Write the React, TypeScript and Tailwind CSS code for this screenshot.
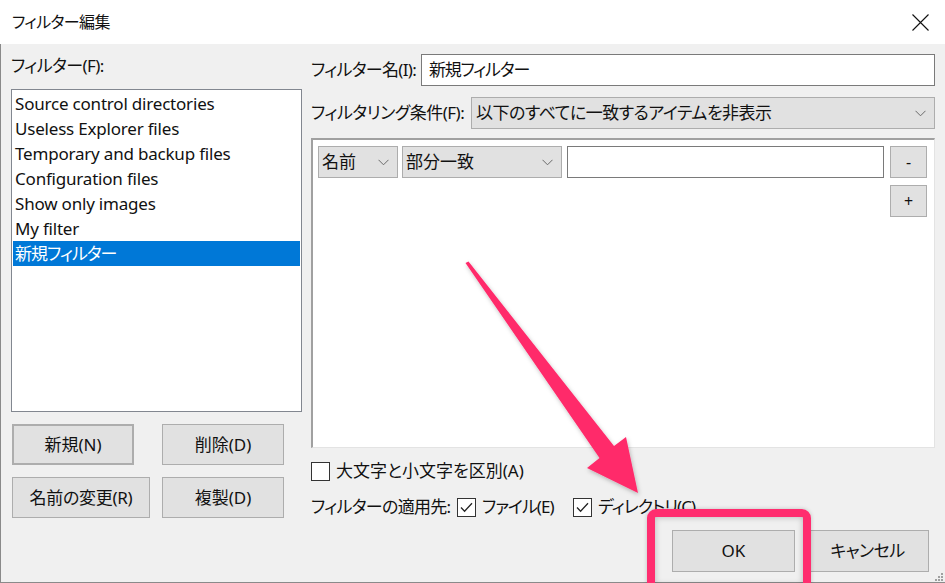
import React from "react";

const font = { fontFamily: '"Noto Sans", "Noto Sans CJK JP", sans-serif' };

function Chevron() {
  return (
    <svg width="11" height="7" viewBox="0 0 11 7" className="shrink-0">
      <path d="M0.5 0.8 L5.5 5.8 L10.5 0.8" fill="none" stroke="#6a6a6a" strokeWidth="1" />
    </svg>
  );
}

function Check({ checked }: { checked?: boolean }) {
  return (
    <div className="w-[19px] h-[19px] border border-[#333] bg-white flex items-center justify-center shrink-0">
      {checked && (
        <svg width="13" height="11" viewBox="0 0 13 11">
          <path d="M1 5.5 L4.6 9.2 L12 1.2" fill="none" stroke="#222" strokeWidth="1.3" />
        </svg>
      )}
    </div>
  );
}

function Btn({ label, className }: { label: string; className: string }) {
  return (
    <div className={`flex items-center justify-center bg-[#e1e1e1] border border-[#adadad] text-[#111] ${className}`}>
      {label}
    </div>
  );
}

const filters = [
  "Source control directories",
  "Useless Explorer files",
  "Temporary and backup files",
  "Configuration files",
  "Show only images",
  "My filter",
];

export default function App() {
  return (
    <div
      className="relative w-[945px] h-[583px] overflow-hidden bg-[#f0f0f0] text-[#111] text-[17px] [font-feature-settings:'palt']"
      style={font}
    >
      {/* Title bar */}
      <div className="h-[44px] bg-white flex items-center justify-between pl-[12px] pr-[16px]">
        <span className="text-[16px] tracking-[-0.6px]">フィルター編集</span>
        <svg width="17" height="17" viewBox="0 0 17 17">
          <path d="M0.5 0.5 L16.5 16.5 M16.5 0.5 L0.5 16.5" stroke="#111" strokeWidth="1.1" />
        </svg>
      </div>

      {/* Body */}
      <div className="flex h-[539px] pl-[10px] pr-[11px] pt-[10px] border-l border-b border-[#8a8a8a]">
        {/* Left column */}
        <div className="w-[291px] flex flex-col shrink-0">
          <div className="h-[35px] pt-[1px] leading-[22px] tracking-[-0.6px]">フィルター(F):</div>
          <div className="h-[323px] bg-white border border-[#828790] pt-[1px] px-[1px]">
            {filters.map((f) => (
              <div key={f} className="h-[25px] leading-[25px] pl-[2px] tracking-[-0.2px]">
                {f}
              </div>
            ))}
            <div className="h-[25px] leading-[25px] pl-[2px] tracking-[-1px] bg-[#0078d7] text-white">
              新規フィルター
            </div>
          </div>
          <div className="grid grid-cols-[150px_122px] gap-y-[12px] mt-[12px] pl-[1px]">
            <Btn label="新規(N)" className="w-[122px] h-[41px] border-2 border-[#0078d7]" />
            <Btn label="削除(D)" className="w-[122px] h-[41px]" />
            <Btn label="名前の変更(R)" className="w-[138px] h-[41px] tracking-[-0.3px]" />
            <Btn label="複製(D)" className="w-[122px] h-[41px]" />
          </div>
        </div>

        {/* Right column */}
        <div className="flex-1 ml-[9px] flex flex-col">
          <div className="flex items-center h-[32px]">
            <span className="w-[110px] whitespace-nowrap tracking-[-0.7px]">フィルター名(I):</span>
            <div className="flex-1 h-[32px] bg-white border border-[#7a7a7a] flex items-center pl-[7px] tracking-[-1.2px]">
              新規フィルター
            </div>
          </div>
          <div className="flex items-center h-[32px] mt-[11px]">
            <span className="w-[160px] whitespace-nowrap tracking-[-0.5px]">フィルタリング条件(F):</span>
            <div className="flex-1 h-[32px] bg-[#e1e1e1] border border-[#adadad] flex items-center justify-between pl-[4px] pr-[8px] tracking-[-0.5px]">
              <span>以下のすべてに一致するアイテムを非表示</span>
              <Chevron />
            </div>
          </div>

          <div className="mt-[9px] h-[310px] bg-white border-t-2 border-l-2 border-[#a0a0a0] border-r border-b border-r-[#e3e3e3] border-b-[#e3e3e3] pl-[5px] pr-[7px] pt-[6px] flex gap-[4px] items-start">
            <div className="w-[80px] h-[32px] bg-[#e1e1e1] border border-[#adadad] flex items-center justify-between pl-[3px] pr-[8px]">
              <span>名前</span>
              <Chevron />
            </div>
            <div className="w-[160px] h-[32px] bg-[#e1e1e1] border border-[#adadad] flex items-center justify-between pl-[3px] pr-[8px]">
              <span>部分一致</span>
              <Chevron />
            </div>
            <div className="w-[317px] h-[32px] ml-[1px] bg-white border border-[#7a7a7a]" />
            <div className="ml-[2px] flex flex-col gap-[7px]">
              <Btn label="-" className="w-[37px] h-[32px] text-[16px]" />
              <Btn label="+" className="w-[37px] h-[32px] text-[16px]" />
            </div>
          </div>

          <div className="flex items-center gap-[6px] mt-[13px] h-[20px]">
            <Check />
            <span>大文字と小文字を区別(A)</span>
          </div>
          <div className="flex items-center mt-[16px] h-[20px]">
            <span className="w-[146px] whitespace-nowrap tracking-[-0.7px]">フィルターの適用先:</span>
            <Check checked />
            <span className="ml-[6px] w-[91px] tracking-[-1px]">ファイル(E)</span>
            <Check checked />
            <span className="ml-[6px] tracking-[-1px]">ディレクトリ(C)</span>
          </div>

          <div className="flex justify-end gap-[11px] mt-[13px] pr-[6px]">
            <Btn label="OK" className="w-[123px] h-[42px]" />
            <Btn label="キャンセル" className="w-[123px] h-[42px] tracking-[-0.5px]" />
          </div>
        </div>
      </div>

      {/* Resize grip */}
      <svg className="absolute right-[2px] bottom-[2px]" width="9" height="9" viewBox="0 0 9 9">
        {[
          [7, 1], [4, 4], [7, 4], [1, 7], [4, 7], [7, 7],
        ].map(([x, y], i) => (
          <rect key={i} x={x} y={y} width="2" height="2" fill="#a0a0a0" />
        ))}
      </svg>

      {/* Highlight frame */}
      <div className="absolute left-[647px] top-[509px] w-[164px] h-[84px] rounded-[9px] border-[8px] border-[#ff2d6f] shadow-[inset_0_0_6px_rgba(0,0,0,0.25),0_0_4px_rgba(0,0,0,0.2)]" />

      {/* Annotation arrow */}
      <svg className="absolute left-0 top-0 pointer-events-none" width="945" height="583" viewBox="0 0 945 583">
        <defs>
          <filter id="sh" x="-20%" y="-20%" width="140%" height="140%">
            <feDropShadow dx="1" dy="2" stdDeviation="2" floodColor="#000" floodOpacity="0.25" />
          </filter>
        </defs>
        <polygon
          points="465.5,263 468.5,261.5 614,446 626,437 638,493 587,468 599.5,458"
          fill="#ff2a6b"
          filter="url(#sh)"
        />
      </svg>
    </div>
  );
}
